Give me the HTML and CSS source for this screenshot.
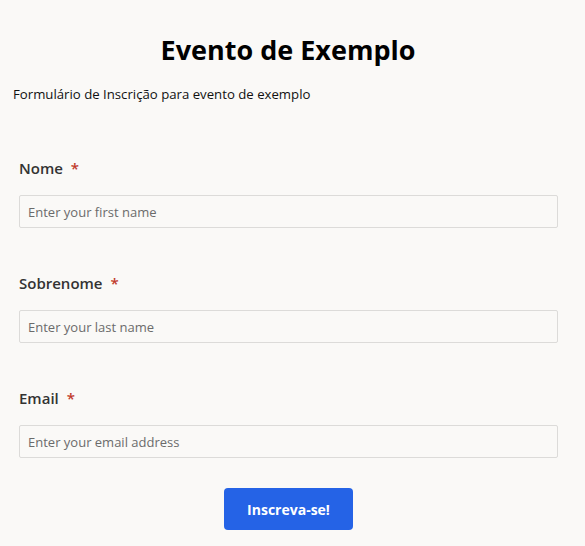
FILE: index.html
```html
<!DOCTYPE html>
<html>
<head>
<meta charset="utf-8">
<link rel="stylesheet" href="styles.css">
</head>
<body>
<div class="page">
  <h1 class="title">Evento de Exemplo</h1>
  <p class="desc">Formulário de Inscrição para evento de exemplo</p>
  <form class="form">
    <div class="field">
      <label class="label">Nome <span class="req">*</span></label>
      <input class="input" type="text" placeholder="Enter your first name">
    </div>
    <div class="field">
      <label class="label">Sobrenome <span class="req">*</span></label>
      <input class="input" type="text" placeholder="Enter your last name">
    </div>
    <div class="field">
      <label class="label">Email <span class="req">*</span></label>
      <input class="input" type="text" placeholder="Enter your email address">
    </div>
    <div class="actions">
      <button class="btn" type="button">Inscreva-se!</button>
    </div>
  </form>
</div>
</body>
</html>
```
FILE: styles.css
```css
html, body {
  margin: 0;
  padding: 0;
  background: #faf9f7;
}
body {
  font-family: "Open Sans", "Noto Sans", sans-serif;
  color: #111;
}
.page {
  padding: 30px 13px 0 13px;
}
.title {
  margin: 0;
  padding-right: 9px;
  text-align: center;
  font-size: 27px;
  font-weight: 700;
  line-height: 40px;
  color: #000;
}
.desc {
  margin: 15px 0 0 0;
  font-size: 13.2px;
  line-height: 18px;
  color: #111;
}
.form {
  padding: 0 14px 0 6px;
  margin-top: 54px;
}
.field {
  display: flex;
  flex-direction: column;
  margin-bottom: 44px;
}
.label {
  font-size: 15px;
  font-weight: 600;
  color: #333;
  line-height: 22px;
  margin-bottom: 16px;
}
.req {
  color: #c0392b;
  margin-left: 4px;
}
.input {
  box-sizing: border-box;
  height: 33px;
  border: 1px solid #dcdbd9;
  border-radius: 2px;
  background: #faf9f7;
  padding: 0 8px;
  font-family: inherit;
  font-size: 13px;
  color: #333;
  outline: none;
}
.input::placeholder {
  color: #6b6b6b;
}
.actions {
  display: flex;
  justify-content: center;
  margin-top: -14px;
}
.btn {
  width: 129px;
  height: 42px;
  background: #2563e6;
  color: #fff;
  border: none;
  border-radius: 4px;
  font-family: inherit;
  font-size: 14px;
  font-weight: 700;
}
```
